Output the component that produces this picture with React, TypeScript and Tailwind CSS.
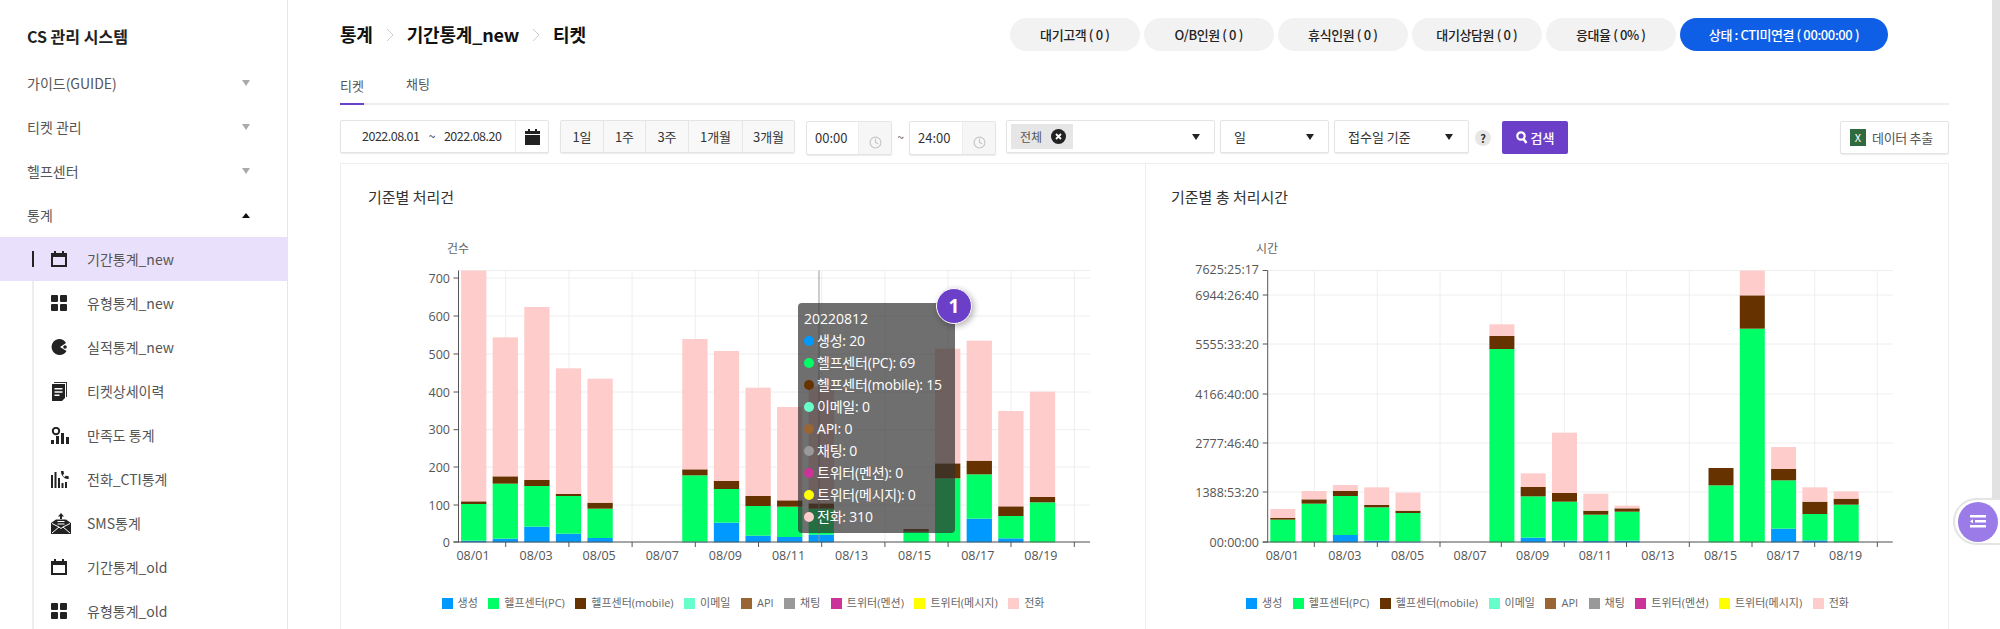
import React from "react";
import { Clock } from "lucide-react";

const COLORS = ["#0099ff", "#00ff66", "#663300", "#ffcccc"];
const LEGEND: [string, string][] = [
  ["생성", "#0099ff"],
  ["헬프센터(PC)", "#00ff66"],
  ["헬프센터(mobile)", "#663300"],
  ["이메일", "#66ffcc"],
  ["API", "#996633"],
  ["채팅", "#999999"],
  ["트위터(멘션)", "#cc3399"],
  ["트위터(메시지)", "#ffff00"],
  ["전화", "#ffcccc"],
];

type Bars = Record<number, number[]>;
const LEFT: Bars = {
  0: [1112, 1002, 994, 302],
  1: [1106, 941, 919, 502],
  2: [1070, 948, 930, 411],
  3: [1091, 978, 972, 595],
  4: [1104, 1016, 998, 626],
  7: [1115, 916, 898, 507],
  8: [1058, 957, 933, 543],
  9: [1097, 1008, 978, 653],
  10: [1101, 1010, 991, 711],
  11: [1094, 1016, 1000, 649],
  14: [1117, 1085, 1077, 1077],
  15: [1117, 925, 880, 536],
  16: [1046, 913, 872, 512],
  17: [1105, 1038, 1009, 723],
  18: [1117, 997, 981, 665],
};
const RIGHT: Bars = {
  0: [1117, 1049, 1044, 1017],
  1: [1117, 1001, 988, 963],
  2: [1095, 978, 963, 945],
  3: [1112, 1012, 1005, 952],
  4: [1115, 1029, 1022, 968],
  7: [1117, 537, 498, 463],
  8: [1103, 979, 951, 910],
  9: [1112, 995, 969, 788],
  10: [1113, 1034, 1022, 971],
  11: [1112, 1025, 1015, 1007],
  14: [1117, 946, 894, 894],
  15: [1117, 476, 376, 302],
  16: [1076, 931, 897, 831],
  17: [1111, 1032, 995, 952],
  18: [1117, 1004, 986, 964],
};
const DATES = ["08/01", "08/03", "08/05", "08/07", "08/09", "08/11", "08/13", "08/15", "08/17", "08/19"];

type ChartProps = {
  x0: number;
  unit: string;
  unitX: number;
  axisX: number;
  endX: number;
  xTicks: number[];
  yTicks: [string, number, number?][];
  labelX: number;
  firstLabel: number;
  labelStep: number;
  firstBar: number;
  barStep: number;
  barWidth: number;
  bars: Bars;
  pointer?: number;
};

// the svg starts at page y = 230
const Y0 = 230;
const py = (z: number) => 170 + z / 3 - Y0;

function Chart(p: ChartProps) {
  const bottom = 542 - Y0;
  const top = 270.5 - Y0;
  const ax = p.axisX - p.x0;
  const ex = p.endX - p.x0;
  return (
    <svg width={804} height={360} className="block font-['Open_Sans','Noto_Sans_CJK_KR',sans-serif]">
      <text x={p.unitX - p.x0} y={18 + 4.5} fontSize={12} fill="#666">
        {p.unit}
      </text>
      {p.yTicks.map(([, y]) => (
        <line key={y} x1={ax} x2={ex} y1={y - Y0} y2={y - Y0} stroke="#eeeeee" strokeWidth={1} />
      ))}
      <line x1={ax} x2={ex} y1={top} y2={top} stroke="#eeeeee" strokeWidth={1} />
      {p.xTicks.map((x) => (
        <line key={x} x1={x - p.x0} x2={x - p.x0} y1={top} y2={bottom} stroke="#eeeeee" strokeWidth={1} />
      ))}
      {Object.entries(p.bars).map(([k, tops]) => {
        const i = Number(k);
        const left = p.firstBar + p.barStep * i - p.barWidth / 2 - p.x0;
        return tops.map((t, s) => {
          const below = s === 0 ? 1117 : tops[s - 1];
          const h = (below - t) / 3;
          if (h <= 0) return null;
          return <rect key={s} x={left} y={py(t)} width={p.barWidth} height={h} fill={COLORS[s]} />;
        });
      })}
      {p.pointer !== undefined && (
        <line x1={p.pointer - p.x0} x2={p.pointer - p.x0} y1={top} y2={bottom} stroke="#999" strokeWidth={1} />
      )}
      <line x1={ax} x2={ax} y1={top} y2={bottom + 0.5} stroke="#555" strokeWidth={1} />
      <line x1={ax - 5} x2={ex} y1={bottom} y2={bottom} stroke="#555" strokeWidth={1} />
      {p.yTicks.map(([label, y, dy]) => (
        <g key={label}>
          <line x1={ax - 5} x2={ax} y1={y - Y0} y2={y - Y0} stroke="#555" strokeWidth={1} />
          <text x={p.labelX - p.x0} y={y - Y0 + 4.5 + (dy ?? 0)} fontSize={12.5} fill="#555" textAnchor="end">
            {label}
          </text>
        </g>
      ))}
      {p.xTicks.map((x) => (
        <line key={x} x1={x - p.x0} x2={x - p.x0} y1={bottom} y2={bottom + 5} stroke="#555" strokeWidth={1} />
      ))}
      {DATES.map((d, i) => (
        <text key={d} x={p.firstLabel + p.labelStep * i - p.x0} y={bottom + 18} fontSize={12.5} fill="#555" textAnchor="middle">
          {d}
        </text>
      ))}
    </svg>
  );
}

function Legend({ className }: { className?: string }) {
  return (
    <div
      className={
        "flex justify-center items-center gap-[10.5px] h-[16px] text-[11px] text-[#666] font-['Open_Sans','Noto_Sans_CJK_KR',sans-serif] " +
        (className ?? "")
      }
    >
      {LEGEND.map(([name, color]) => (
        <div key={name} className="flex items-center gap-[5px]">
          <span className="w-[11px] h-[11px] block" style={{ backgroundColor: color }} />
          <span className="whitespace-nowrap">{name}</span>
        </div>
      ))}
    </div>
  );
}

const TIP: [string, string][] = [
  ["생성: 20", "#0099ff"],
  ["헬프센터(PC): 69", "#00ff66"],
  ["헬프센터(mobile): 15", "#663300"],
  ["이메일: 0", "#66ffcc"],
  ["API: 0", "#996633"],
  ["채팅: 0", "#999999"],
  ["트위터(멘션): 0", "#cc3399"],
  ["트위터(메시지): 0", "#ffff00"],
  ["전화: 310", "#ffcccc"],
];

function Tooltip() {
  return (
    <div className="absolute left-[457px] top-[139px] w-[157px] h-[230px] rounded bg-[rgba(50,50,50,0.7)] px-[6px] py-[5px] text-white text-[14px] leading-[22px] font-['Open_Sans','Noto_Sans_CJK_KR',sans-serif]">
      <div>20220812</div>
      {TIP.map(([t, c]) => (
        <div key={t} className="flex items-center gap-[3px] whitespace-nowrap tracking-[-0.2px]">
          <span className="w-[10px] h-[10px] rounded-full block" style={{ backgroundColor: c }} />
          <span>{t}</span>
        </div>
      ))}
      <div className="absolute -right-[17px] -top-[15px] w-[36px] h-[36px] rounded-full bg-[#6c3fc9] border border-white shadow-[2px_2px_6px_rgba(0,0,0,0.3)] flex items-center justify-center text-[19px] font-bold">
        1
      </div>
    </div>
  );
}

/* sidebar icons */
const IconCal = () => (
  <svg width="16" height="16" viewBox="0 0 16 16">
    <path d="M3 0h2v2h6V0h2v2h3v14H0V2h3zM2 6v8h12V6z" fill="#222" />
  </svg>
);
const IconGrid = () => (
  <svg width="16" height="16" viewBox="0 0 16 16" fill="#222">
    <rect x="0" y="0" width="7" height="7" rx="1" />
    <rect x="9" y="0" width="7" height="7" rx="1" />
    <rect x="0" y="9" width="7" height="7" rx="1" />
    <rect x="9" y="9" width="7" height="7" rx="1" />
  </svg>
);
const IconPie = () => (
  <svg width="16" height="16" viewBox="0 0 16 16">
    <path d="M8 0a8 8 0 0 1 7 4L9 8l6.5 4A8 8 0 1 1 8 0z" fill="#222" />
    <circle cx="14" cy="8" r="1.8" fill="#222" />
  </svg>
);
const IconDoc = () => (
  <svg width="17" height="19" viewBox="0 0 17 19">
    <path d="M3 0h13v15h-1V1H3z" fill="#333" />
    <path d="M1 2h13v14l-3 3H1z" fill="#222" />
    <path d="M3.5 6h8v1.4h-8zM3.5 9.3h8v1.4h-8zM3.5 12.6h5v1.4h-5z" fill="#fff" />
  </svg>
);
const IconSat = () => (
  <svg width="18" height="17" viewBox="0 0 18 17" fill="#222">
    <circle cx="5" cy="4" r="3.2" fill="none" stroke="#222" strokeWidth="2" />
    <rect x="0" y="13" width="3" height="4" />
    <rect x="5" y="9" width="3" height="8" />
    <rect x="10" y="6" width="3" height="11" />
    <rect x="15" y="10" width="3" height="7" />
  </svg>
);
const IconCti = () => (
  <svg width="18" height="17" viewBox="0 0 18 17" fill="#222">
    <rect x="0" y="4" width="2" height="13" />
    <rect x="3.5" y="1" width="2" height="16" />
    <rect x="7" y="7" width="2" height="10" />
    <rect x="10.5" y="12" width="2" height="5" />
    <rect x="14" y="11" width="2" height="6" />
    <path d="M10 0h2.5l.5 3-1.3 1c.4 1 1 1.6 2 2l1-1.3 3 .5V8c-4 .5-8-3.5-7.700-8z" />
  </svg>
);
const IconSms = () => (
  <svg width="20" height="21" viewBox="0 0 20 21">
    <path d="M10 0l3 3.500h-2V6H9V3.500H7z" fill="#222" />
    <path d="M0 10l5-3.500h10l5 3.500v11H0z" fill="#222" />
    <path d="M1 20l7-6 2 1.500 2-1.500 7 6M1 10.500l7 3.500M19 10.500l-7 3.500" fill="none" stroke="#fff" strokeWidth="1" />
    <rect x="6.500" y="8" width="7" height="1" fill="#fff" />
    <rect x="6.500" y="10.500" width="7" height="1" fill="#fff" />
  </svg>
);

const TOP_ITEMS = ["가이드(GUIDE)", "티켓 관리", "헬프센터"];
const SUB_ITEMS: [string, React.ReactNode][] = [
  ["기간통계_new", <IconCal key="a" />],
  ["유형통계_new", <IconGrid key="b" />],
  ["실적통계_new", <IconPie key="c" />],
  ["티켓상세이력", <IconDoc key="d" />],
  ["만족도 통계", <IconSat key="e" />],
  ["전화_CTI통계", <IconCti key="f" />],
  ["SMS통계", <IconSms key="g" />],
  ["기간통계_old", <IconCal key="h" />],
  ["유형통계_old", <IconGrid key="i" />],
];

function Sidebar() {
  return (
    <aside className="w-[288px] shrink-0 border-r border-[#e6e6e6] bg-white">
      <div className="h-[61px] pl-[27px] pt-[23px] text-[16px] leading-[26px] font-bold text-[#222]">CS 관리 시스템</div>
      {TOP_ITEMS.map((t) => (
        <div key={t} className="h-[44px] pl-[27px] pr-[20px] flex items-center justify-between text-[14px] text-[#555]">
          <span>{t}</span>
          <span className="w-0 h-0 border-x-[4px] border-x-transparent border-t-[6px] border-t-[#aaa] mr-[17px]" />
        </div>
      ))}
      <div className="h-[44px] pl-[27px] pr-[20px] flex items-center justify-between text-[14px] text-[#555]">
        <span>통계</span>
        <span className="w-0 h-0 border-x-[4px] border-x-transparent border-b-[5px] border-b-[#111] mr-[17px]" />
      </div>
      {SUB_ITEMS.map(([t, icon], i) => (
        <div key={t} className={"h-[44px] flex items-center " + (i === 0 ? "bg-[#e9e0fb]" : "")}>
          <div className={"w-[2px] ml-[32px] " + (i === 0 ? "h-[16px] bg-[#222]" : "self-stretch bg-[#eeeeee]")} />
          <div className="w-[53px] pl-[17px] flex items-center">{icon}</div>
          <span className="text-[14px] text-[#555]">{t}</span>
        </div>
      ))}
    </aside>
  );
}

const PILLS = ["대기고객 ( 0 )", "O/B인원 ( 0 )", "휴식인원 ( 0 )", "대기상담원 ( 0 )", "응대율 ( 0% )"];

function Header() {
  return (
    <div className="flex items-center justify-between h-[33px] mt-[18px] pr-[61px]">
      <div className="flex items-center text-[18px] font-bold text-[#111] tracking-[-0.2px]">
        <span>통계</span>
        <svg width="8" height="14" viewBox="0 0 8 14" className="mx-[13px]">
          <path d="M1 1l6 6-6 6" fill="none" stroke="#ccc" strokeWidth="1" />
        </svg>
        <span>기간통계_new</span>
        <svg width="8" height="14" viewBox="0 0 8 14" className="mx-[13px]">
          <path d="M1 1l6 6-6 6" fill="none" stroke="#ccc" strokeWidth="1" />
        </svg>
        <span>티켓</span>
      </div>
      <div className="flex gap-[4.5px] text-[13px] font-medium">
        {PILLS.map((p) => (
          <div key={p} className="w-[129.5px] h-[33px] rounded-full bg-[#f2f2f2] text-[#222] flex items-center justify-center whitespace-nowrap tracking-[-0.4px]">
            {p}
          </div>
        ))}
        <div className="w-[208px] h-[33px] rounded-full bg-[#0f5fe6] text-white flex items-center justify-center whitespace-nowrap tracking-[-0.4px]">
          상태 : CTI미연결 ( 00:00:00 )
        </div>
      </div>
    </div>
  );
}

function Tabs() {
  return (
    <div className="flex gap-[42px] h-[54px] items-end border-b-2 border-[#eeeeee] text-[13px] text-[#555]">
      <div className="h-[30px] border-b-2 border-[#6c3fc9] -mb-[2px] leading-[22px]">티켓</div>
      <div className="h-[30px] leading-[22px]">채팅</div>
    </div>
  );
}

const boxCls = "border border-[#e4e4e4] shadow-[0_1px_1px_rgba(0,0,0,0.08)] bg-white rounded-[2px]";
const Caret = () => <span className="w-0 h-0 border-x-[4px] border-x-transparent border-t-[6px] border-t-[#222]" />;

function TimeBox({ value, width }: { value: string; width: string }) {
  return (
    <div className={"flex h-[34px] mt-px " + width + " " + boxCls}>
      <div className="flex-1 flex items-center pl-[8px] text-[13px] text-[#333] border-r border-[#eeeeee]">{value}</div>
      <div className="w-[32px] bg-[#f6f6f6] flex items-end justify-center pb-[5px]">
        <Clock size={13} color="#c4c4c4" />
      </div>
    </div>
  );
}

function Filters() {
  return (
    <div className="flex mt-[15px] h-[34px] text-[13px] text-[#333]">
      <div className={"flex w-[209px] h-[33px] " + boxCls}>
        <div className="flex-1 flex items-center pl-[21px] gap-[9px] text-[12.5px] tracking-[-0.5px] whitespace-nowrap">
          <span>2022.08.01</span>
          <span>~</span>
          <span>2022.08.20</span>
        </div>
        <div className="w-[33px] border-l border-[#eeeeee] flex items-center justify-center">
          <svg width="15" height="16" viewBox="0 0 15 16">
            <path d="M3 0h2v2h5V0h2v2h3v3H0V2h3zM0 6h15v10H0z" fill="#222" />
          </svg>
        </div>
      </div>
      <div className={"flex ml-[11px] w-[235px] h-[33px] bg-[#f8f8f8] " + boxCls}>
        {[
          ["1일", "w-[42px]"],
          ["1주", "w-[42px]"],
          ["3주", "w-[43px]"],
          ["1개월", "w-[54px]"],
          ["3개월", "flex-1"],
        ].map(([t, w], i) => (
          <div key={t} className={"flex items-center justify-center bg-[#f8f8f8] " + w + (i > 0 ? " border-l border-[#e6e6e6]" : "")}>
            {t}
          </div>
        ))}
      </div>
      <div className="ml-[11px]">
        <TimeBox value="00:00" width="w-[86px]" />
      </div>
      <div className="w-[17px] flex items-center justify-center text-[12px] text-[#555]">~</div>
      <TimeBox value="24:00" width="w-[87px]" />
      <div className={"ml-[10px] w-[209px] h-[33px] flex items-center justify-between pl-[4px] pr-[14px] " + boxCls}>
        <div className="h-[25px] w-[62px] bg-[#e6e6e6] flex items-center pl-[9px] gap-[9px] text-[12px] text-[#555]">
          <span>전체</span>
          <svg width="15" height="15" viewBox="0 0 15 15">
            <circle cx="7.500" cy="7.500" r="7.500" fill="#222" />
            <path d="M5 5l5 5M10 5l-5 5" stroke="#fff" strokeWidth="1.800" />
          </svg>
        </div>
        <Caret />
      </div>
      <div className={"ml-[5px] w-[109px] h-[33px] flex items-center justify-between pl-[13px] pr-[14px] " + boxCls}>
        <span>일</span>
        <Caret />
      </div>
      <div className={"ml-[5px] w-[135px] h-[33px] flex items-center justify-between pl-[13px] pr-[15px] " + boxCls}>
        <span>접수일 기준</span>
        <Caret />
      </div>
      <div className="ml-[6px] mt-[10px] w-[16px] h-[16px] rounded-full bg-[#e6e6e6] flex items-center justify-center text-[11px] font-bold text-[#333]">?</div>
      <div className="ml-[11px] mt-px w-[66px] h-[33px] bg-[#6c3fc9] rounded-[2px] text-white flex items-center justify-center gap-[3px] font-medium">
        <svg width="12" height="13" viewBox="0 0 12 13">
          <circle cx="5" cy="5" r="3.700" fill="none" stroke="#fff" strokeWidth="2.200" />
          <path d="M7.500 8l3 4" stroke="#fff" strokeWidth="2.400" />
        </svg>
        <span>검색</span>
      </div>
      <div className={"ml-auto mt-px w-[109px] h-[33px] flex items-center pl-[9px] gap-[6px] bg-[#fafafa] whitespace-nowrap " + boxCls}>
        <span className="w-[16px] h-[17px] bg-[#2f6b3f] text-white text-[11px] flex items-center justify-center">X</span>
        <span className="text-[#555] tracking-[-0.3px]">데이터 추출</span>
      </div>
    </div>
  );
}

function Cards() {
  return (
    <div className="mt-[9px] flex border border-[#eeeeee] w-[1609px] h-[480px]">
      <div className="relative w-[805px] shrink-0 border-r border-[#eeeeee]">
        <div className="h-[66px] pl-[27px] pt-[22px] text-[15px] leading-[22px] text-[#333]">기준별 처리건</div>
        <Chart
          x0={341}
          unit="건수"
          unitX={447}
          axisX={458.5}
          endX={1090}
          xTicks={[505.7, 568.9, 632.1, 695.3, 758.5, 821.7, 884.9, 948.1, 1011, 1074.3]}
          yTicks={[
            ["0", 542],
            ["100", 505],
            ["200", 467],
            ["300", 429.7],
            ["400", 392],
            ["500", 354],
            ["600", 316],
            ["700", 278],
          ]}
          labelX={450}
          firstLabel={473}
          labelStep={63.1}
          firstBar={473.7}
          barStep={31.6}
          barWidth={25.3}
          bars={LEFT}
          pointer={819}
        />
        <Legend className="mt-[5px]" />
        <Tooltip />
      </div>
      <div className="w-[803px] shrink-0">
        <div className="h-[66px] pl-[25px] pt-[22px] text-[15px] leading-[22px] text-[#333]">기준별 총 처리시간</div>
        <Chart
          x0={1146}
          unit="시간"
          unitX={1256}
          axisX={1267.7}
          endX={1892.7}
          xTicks={[1314.3, 1377.3, 1440, 1501.3, 1564.3, 1626.5, 1689.3, 1752, 1814.7, 1877.3]}
          yTicks={[
            ["00:00:00", 542],
            ["1388:53:20", 492],
            ["2777:46:40", 443],
            ["4166:40:00", 394],
            ["5555:33:20", 344],
            ["6944:26:40", 295],
            ["7625:25:17", 270.5, -1.5],
          ]}
          labelX={1259}
          firstLabel={1282.3}
          labelStep={62.6}
          firstBar={1282.8}
          barStep={31.3}
          barWidth={25}
          bars={RIGHT}
        />
        <Legend className="mt-[5px]" />
      </div>
    </div>
  );
}

export default function App() {
  return (
    <div className="relative flex w-[2000px] h-[629px] overflow-hidden bg-white text-[#333] font-['Noto_Sans_CJK_KR','Noto_Sans',sans-serif]">
      <Sidebar />
      <main className="flex-1 min-w-0 pl-[52px] pr-[43px]">
        <Header />
        <Tabs />
        <Filters />
        <Cards />
      </main>
      <div className="w-[8px] shrink-0 h-[498px] bg-[#e2e2e2]" />
      <div className="absolute right-0 top-[498px] w-[47px] h-[47px] rounded-l-full border-2 border-r-0 border-[#e4e4e4] bg-white flex items-center pl-[3px]">
        <div className="w-[40px] h-[40px] rounded-full bg-[#9b7be8] flex items-center justify-center">
          <svg width="16" height="13" viewBox="0 0 16 13" fill="#fff">
            <rect x="0" y="0" width="16" height="2.500" />
            <rect x="5" y="5" width="11" height="2.500" />
            <path d="M0 6.200l3-2v4z" />
            <rect x="0" y="10" width="16" height="2.500" />
          </svg>
        </div>
      </div>
    </div>
  );
}
